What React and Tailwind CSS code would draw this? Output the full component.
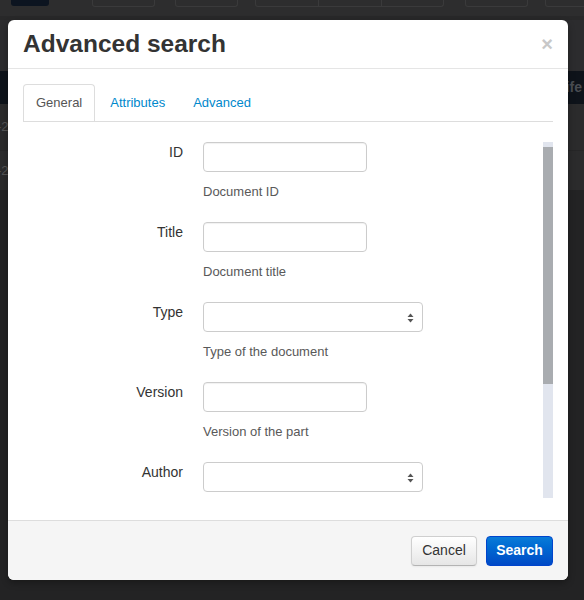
import React from "react";

const rows = [
  { label: "ID", help: "Document ID", kind: "input" },
  { label: "Title", help: "Document title", kind: "input" },
  { label: "Type", help: "Type of the document", kind: "select" },
  { label: "Version", help: "Version of the part", kind: "input" },
  { label: "Author", kind: "select" },
];

const SelectArrows = () => (
  <svg width="7" height="10" viewBox="0 0 7 10" className="absolute right-[8px] top-[10px]">
    <path d="M3.5 0.5 L6.5 4 L0.5 4 Z" fill="#555" />
    <path d="M3.5 9.5 L6.5 6 L0.5 6 Z" fill="#555" />
  </svg>
);

const FormRow = ({ label, help, kind }) => (
  <div className="flex">
    <div className="w-[160px] shrink-0 text-right text-[14px] leading-[20px] text-[#333]">{label}</div>
    <div className="ml-[20px] flex flex-col">
      {kind === "select" ? (
        <div className="relative h-[30px] w-[220px] rounded-[4px] border border-[#ccc] bg-white">
          <SelectArrows />
        </div>
      ) : (
        <div className="h-[30px] w-[164px] rounded-[4px] border border-[#ccc] bg-white shadow-[inset_0_1px_1px_rgba(0,0,0,0.06)]" />
      )}
      {help && <div className="mt-[10px] text-[13px] leading-[20px] text-[#595959]">{help}</div>}
    </div>
  </div>
);

export default function App() {
  return (
    <div className="relative h-[600px] w-[584px] overflow-hidden bg-[#232324] font-['Liberation_Sans',Arial,sans-serif]">
      {/* page behind the backdrop */}
      <div className="flex flex-col">
        <div className="relative h-[16px] bg-[#2d2d2e]">
          <div className="absolute left-[11px] top-0 h-[6px] w-[38px] rounded-b-[3px] bg-[#0c1420]" />
          <div className="absolute left-[92px] top-0 h-[7px] w-[63px] rounded-b-[3px] border border-t-0 border-[#3a3a3b]" />
          <div className="absolute left-[175px] top-0 h-[7px] w-[63px] rounded-b-[3px] border border-t-0 border-[#3a3a3b]" />
          <div className="absolute left-[255px] top-0 flex h-[7px] w-[189px] rounded-b-[3px] border border-t-0 border-[#3a3a3b]">
            <div className="w-[63px] border-r border-[#3a3a3b]" />
            <div className="w-[63px] border-r border-[#3a3a3b]" />
          </div>
          <div className="absolute left-[465px] top-0 h-[7px] w-[63px] rounded-b-[3px] border border-t-0 border-[#3a3a3b]" />
          <div className="absolute left-[545px] top-0 h-[7px] w-[60px] rounded-b-[3px] border border-t-0 border-[#3a3a3b]" />
        </div>
        <div className="h-[4px] bg-[#282829]" />
        <div className="h-[51px] bg-[#2c2c2e]" />
        <div className="flex h-[33px] items-center justify-end bg-[#0e131a] pr-[2px] text-[14px] font-bold text-[#4a4d52]">
          Life
        </div>
        <div className="flex h-[46px] items-center bg-[#2b2b2c] text-[13px] text-[#555]">
          <span className="-ml-[3px]">-2</span>
        </div>
        <div className="flex h-[40px] items-center border-t border-[#262627] bg-[#2b2b2c] text-[13px] text-[#555]">
          <span className="-ml-[3px]">-2</span>
        </div>
      </div>

      {/* modal */}
      <div className="absolute left-[8px] top-[20px] flex h-[560px] w-[560px] flex-col overflow-hidden rounded-[6px] bg-white shadow-[0_3px_7px_rgba(0,0,0,0.3)]">
        <div className="flex h-[49px] shrink-0 items-center justify-between border-b border-[#e5e5e5] px-[15px]">
          <h3 className="text-[24.5px] font-bold leading-none text-[#333]">Advanced search</h3>
          <span className="text-[20px] font-bold leading-none text-[#c8c8c8]">×</span>
        </div>

        <div className="flex flex-1 flex-col px-[15px] pt-[15px]">
          <div className="flex h-[38px] shrink-0 border-b border-[#ddd] text-[13px] leading-[20px]">
            <div className="mr-[2px] flex items-center rounded-t-[4px] border border-b-0 border-[#ddd] px-[12px] text-[#555]">
              General
            </div>
            <div className="mr-[2px] flex items-center border border-transparent px-[12px] text-[#0088cc]">
              Attributes
            </div>
            <div className="flex items-center border border-transparent px-[12px] text-[#0088cc]">
              Advanced
            </div>
          </div>

          <div className="mt-[20px] flex h-[356px] shrink-0">
            <div className="flex flex-1 flex-col gap-[20px] overflow-hidden">
              {rows.map((r) => (
                <FormRow key={r.label} {...r} />
              ))}
            </div>
            <div className="w-[10px] shrink-0 bg-[#e1e5ee] pt-[5px]">
              <div className="h-[237px] bg-[#a9acb0]" />
            </div>
          </div>
        </div>

        <div className="flex h-[60px] shrink-0 items-center justify-end gap-[9px] border-t border-[#ddd] bg-[#f5f5f5] px-[15px]">
          <button className="h-[30px] w-[66px] rounded-[4px] border border-[#cfcfcf] border-b-[#b3b3b3] bg-gradient-to-b from-white to-[#e6e6e6] text-[14px] text-[#333] shadow-[inset_0_1px_0_rgba(255,255,255,0.2),0_1px_2px_rgba(0,0,0,0.05)]">
            Cancel
          </button>
          <button className="h-[30px] w-[67px] rounded-[4px] border border-[#0044cc] bg-gradient-to-b from-[#0a7bd8] to-[#0049c6] text-[14px] font-bold text-white">
            Search
          </button>
        </div>
      </div>
    </div>
  );
}
